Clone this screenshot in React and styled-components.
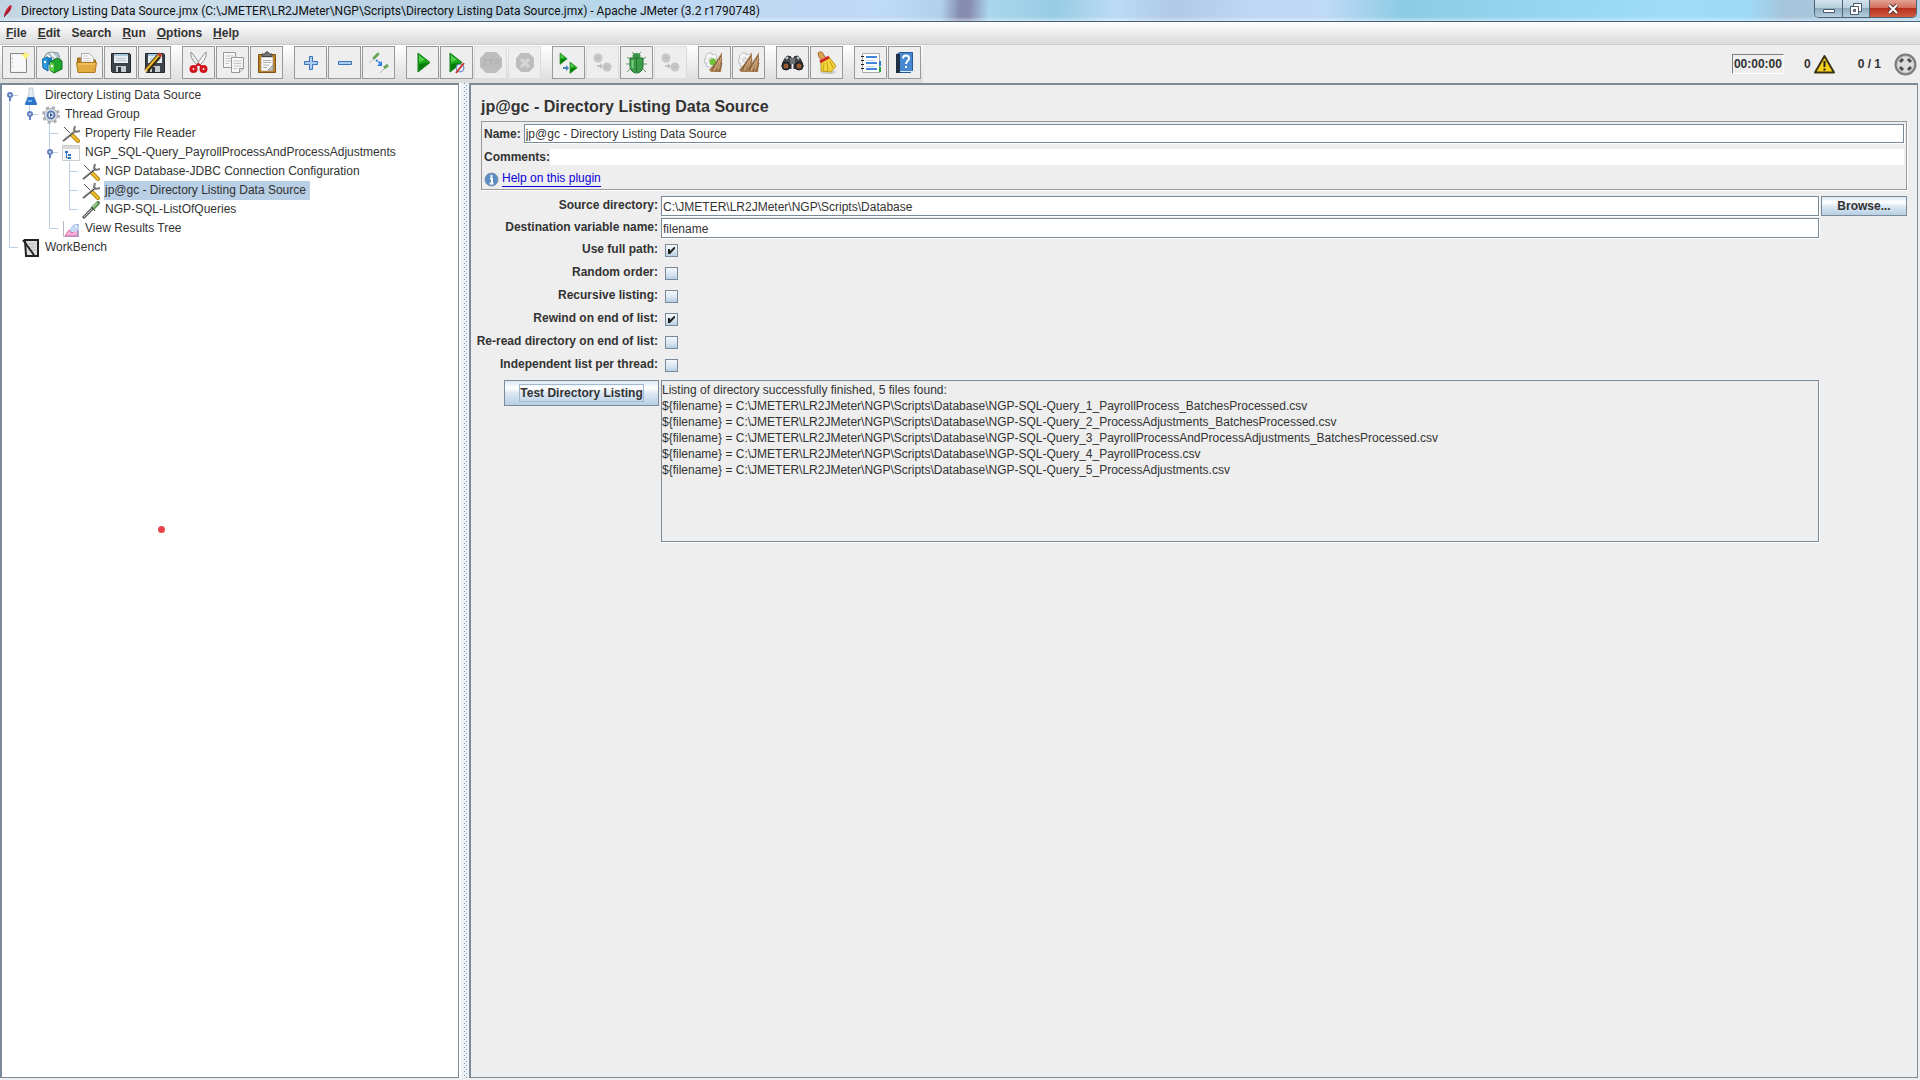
import React, { useState } from 'react'
import styled, { createGlobalStyle, css } from 'styled-components'

const color = {
  text: '#333333',
  panel: '#eeeeee',
  border: '#7a8a99',
  line: '#b8cfe5',
  handle: '#6382bf',
  link: '#0a00d8',
  white: '#ffffff',
}

const GlobalStyle = createGlobalStyle`
  * {
    box-sizing: border-box;
  }
  body {
    margin: 0;
    background: ${color.panel};
    color: ${color.text};
    font-family: "Liberation Sans", Arial, sans-serif;
    font-size: 12px;
  }
  button, input, textarea {
    font: inherit;
    color: inherit;
    margin: 0;
  }
`

const Window = styled.div`
  display: flex;
  flex-direction: column;
  min-height: 100vh;
  position: relative;
`

/* ---------- title bar ---------- */

const TitleBar = styled.header`
  display: flex;
  align-items: flex-start;
  height: 22px;
  padding: 0 3px 0 4px;
  border-bottom: 1px solid #46607a;
  background:
    linear-gradient(180deg, rgba(255, 255, 255, 0.1) 0 80%, rgba(255, 255, 255, 0.5) 100%),
    linear-gradient(94deg, #b9cfe0 0%, #cfe0ec 6%, #bfd6e8 14%, #a9c8dd 25%, #b0d4e8 31%,
      #b8d4f0 35%, #b8d6f5 46%, #a8cbe8 49%, #767fa5 50%, #7d80a6 50.5%, #9fd2ea 51.5%,
      #8cc6e0 55%, #b5d7f4 58%, #a7c4e2 61%, #b6d3f3 65%, #b8d6f5 69%, #7fc6e0 73%,
      #8ad0ee 80%, #95d8f8 87%, #93d5f6 91%, #9dbdd6 93%, #a8cfe6 100%);
`

const Title = styled.h1`
  display: flex;
  align-items: center;
  gap: 5px;
  flex: 1;
  margin: 0;
  height: 21px;
  color: #111111;
  font-family: Roboto, "Noto Sans", sans-serif;
  font-size: 12px;
  font-weight: 400;
  white-space: nowrap;
`

const WindowButtons = styled.div`
  display: flex;
  height: 18px;
  border: 1px solid #4c6478;
  border-top: 0;
  border-radius: 0 0 5px 5px;
  overflow: hidden;
`

const WindowButton = styled.button`
  display: flex;
  align-items: center;
  justify-content: center;
  width: ${(props) => (props.$close ? 47 : 27)}px;
  padding: 0;
  border: 0;
  border-left: ${(props) => (props.$first ? '0' : '1px solid #4c6478')};
  background: ${(props) =>
    props.$close
      ? 'linear-gradient(180deg, #e0a294 0%, #d4705c 45%, #b8301c 50%, #cf5a41 100%)'
      : 'linear-gradient(180deg, #d3e3ee 0%, #b9cfde 45%, #91abbf 50%, #b4cfe0 100%)'};
`

/* ---------- menu and toolbar ---------- */

const MenuBar = styled.nav`
  display: flex;
  align-items: center;
  gap: 11px;
  height: 23px;
  padding: 0 6px;
  border-bottom: 1px solid #cccccc;
  background: linear-gradient(180deg, #ffffff 0%, #dadada 100%);
`

const MenuItem = styled.button`
  padding: 0;
  border: 0;
  background: none;
  font-weight: 700;
  line-height: 16px;
`

const ToolBar = styled.div`
  display: flex;
  justify-content: space-between;
  height: 38px;
`

const Tools = styled.div`
  display: flex;
  gap: 11px;
  padding: 1px 2px 0;
  background: linear-gradient(180deg, #ffffff 0%, #dcdcdc 100%);
`

const ToolGroup = styled.div`
  display: flex;
  gap: 1px;
`

const ToolButton = styled.button`
  display: flex;
  width: 33px;
  height: 33px;
  padding: 3px 0 0 3px;
  border: 1px solid ${(props) => (props.disabled ? '#dcdcdc' : '#999999')};
  background: ${color.panel};

  svg {
    flex-shrink: 0;
  }
`

const Status = styled.div`
  display: flex;
  align-items: center;
  height: 38px;
  padding-right: 3px;
  font-weight: 700;
`

const Timer = styled.span`
  width: 52px;
  margin-right: 20px;
  border: 1px solid ${color.white};
  border-top-color: #808080;
  border-left-color: #808080;
  line-height: 18px;
  text-align: center;
`

const Errors = styled.span`
  display: flex;
  align-items: center;
  gap: 3px;
  margin-right: 23px;
`

const Threads = styled.span`
  margin-right: 13px;
`

/* ---------- split pane ---------- */

const Split = styled.main`
  display: flex;
  flex: 1;
  padding-bottom: 2px;
`

const TreePane = styled.section`
  width: 459px;
  padding-top: 1px;
  border: 1px solid ${color.border};
  border-top-width: 2px;
  border-left-width: 2px;
  background: ${color.white};
`

const Divider = styled.div`
  width: 10px;
  border-left: 2px solid ${color.white};
  background-color: #eef2f7;
  background-image:
    linear-gradient(180deg, #7f90a3 1px, transparent 1px),
    linear-gradient(180deg, #7f90a3 1px, transparent 1px);
  background-position: 3px 0, 5px 2px;
  background-size: 1px 4px;
  background-repeat: repeat-y;
`

const EditorPane = styled.section`
  flex: 1;
  margin-right: 2px;
  padding: 11px 10px 10px;
  border: 1px solid ${color.border};
  border-top-width: 2px;
  border-left-width: 2px;
`

const TreeList = styled.ul`
  margin: 0;
  padding: 0;
  list-style: none;
`

const TreeRow = styled.li`
  display: flex;
  align-items: center;
  height: 19px;
`

const TreeLabel = styled.span`
  margin-left: 4px;
  padding: 0 4px 0 1px;
  line-height: 19px;
  white-space: nowrap;
  background: ${(props) => (props.$selected ? color.line : 'transparent')};
`

/* ---------- editor ---------- */

const Heading = styled.h2`
  margin: 0 0 3px;
  font-size: 16px;
  line-height: 22px;
`

const fieldStyle = css`
  width: 100%;
  border: 1px solid ${color.border};
  border-radius: 0;
  outline: 0;
  box-shadow: 1px 1px 0 ${color.white};
`

const NameBox = styled.div`
  height: 69px;
  padding: 2px;
  border: 1px solid #999999;
  box-shadow: 1px 1px 0 ${color.white};
`

const NameRow = styled.div`
  display: flex;
  align-items: center;
  gap: ${(props) => (props.$tight ? 0 : 3)}px;
  height: ${(props) => (props.$tight ? 16 : 19)}px;
  margin-bottom: 6px;
`

const BoldLabel = styled.label`
  font-weight: 700;
  line-height: 18px;
  white-space: nowrap;
`

const NameInput = styled.input`
  ${fieldStyle}
  height: 19px;
  padding: 0 1px;
  background: ${color.white};
`

const CommentsInput = styled.input`
  width: 100%;
  height: 16px;
  padding: 0 1px;
  border: 0;
  outline: 0;
  background: ${color.white};
`

const HelpRow = styled.div`
  display: flex;
  align-items: center;
  gap: 3px;
`

const HelpLink = styled.a`
  border-bottom: 1px solid ${color.link};
  color: ${color.link};
  line-height: 15px;
  text-decoration: none;
`

const Form = styled.form`
  display: grid;
  grid-template-columns: 178px 1fr 86px;
  column-gap: 2px;
  row-gap: 2px;
  margin-top: 6px;
`

const FormLabel = styled(BoldLabel)`
  justify-self: end;
  padding-right: 1px;
`

const TextField = styled.input`
  ${fieldStyle}
  height: 20px;
  padding: 2px 1px 0;
  background: ${color.white};
`

const CheckCell = styled.div`
  display: flex;
  grid-column: 2 / 4;
  align-items: center;
  height: 21px;
  padding-left: 4px;
`

const CheckBox = styled.input`
  appearance: none;
  display: grid;
  place-items: center;
  width: 13px;
  height: 13px;
  border: 1px solid ${color.border};
  background: linear-gradient(180deg, #f4f8fb 0%, #dde8f3 50%, #b8cfe5 100%);

  &:checked::after {
    content: '';
    width: 7px;
    height: 7px;
    background: #222222;
    clip-path: polygon(0 30%, 28% 30%, 28% 58%, 86% 0, 100% 0, 100% 26%, 30% 100%, 0 100%);
  }
`

const MetalButton = styled.button`
  height: ${(props) => (props.$tall ? 26 : 20)}px;
  padding: 0;
  border: 1px solid ${color.border};
  background: linear-gradient(180deg, #dde8f3 0%, #ffffff 30%, #dde8f3 50%, #b8cfe5 100%);
  font-weight: 700;
  white-space: nowrap;
`

const TestButton = styled(MetalButton)`
  justify-self: end;
  width: 155px;
  margin-top: 2px;
`

const FocusText = styled.span`
  display: inline-block;
  border: 1px solid #a3b8cc;
  line-height: 16px;
`

const Output = styled.textarea`
  ${fieldStyle}
  display: block;
  height: 162px;
  margin-top: 2px;
  padding: 1px 0 0;
  background: ${color.panel};
  line-height: 16px;
  resize: none;
  overflow: hidden;
`

const Pointer = styled.span`
  position: absolute;
  left: 158px;
  top: 526px;
  width: 7px;
  height: 7px;
  border-radius: 50%;
  background: #e8424a;
`

/* ---------- icons ---------- */

const Icon = ({ size = 24, box = 24, children }) => (
  <svg width={size} height={size} viewBox={`0 0 ${box} ${box}`} fill="none" aria-hidden="true">
    {children}
  </svg>
)

const Sheet = ({ x, y, w = 12, h = 15 }) => (
  <g transform={`translate(${x} ${y})`}>
    <path d={`M0 0H${w}V${h - 4}L${w - 4} ${h}H0Z`} fill="#f6f6f6" stroke="#999" />
    <path d={`M${w} ${h - 4}H${w - 4}V${h}`} fill="#ddd" stroke="#999" />
    <path d="M2 3.500h8M2 6h8M2 8.500h8M2 11h4" stroke="#c4c4c4" />
  </g>
)

const Floppy = () => (
  <>
    <path d="M3.500 3.500h18l1 1V22.500H4.500l-1-1Z" fill="#3d444b" stroke="#23282d" />
    <path d="M6 4h14v9H6Z" fill="#e6edf2" />
    <path d="M6 4h14v2H6Z" fill="#a8c8e0" />
    <path d="M8 8.500h10M8 10.500h10" stroke="#bcc6cc" />
    <path d="M8 16h10v6H8Z" fill="#c8ccd0" />
    <path d="M10 17h3v5h-3Z" fill="#30363c" />
  </>
)

const Play = ({ x = 0, y = 0, s = 1 }) => (
  <g transform={`translate(${x} ${y}) scale(${s})`}>
    <path d="M0 0L12 9.500L0 19Z" fill="#1ba81b" stroke="#0d7a12" />
    <path d="M1 11L11 9.500L1 17.500Z" fill="#077a0b" />
    <path d="M1 2L7 7L1 9Z" fill="#54cf4c" />
  </g>
)

const GreyBalls = () => (
  <>
    <circle cx="8" cy="8" r="4.500" fill="#c6c6c6" />
    <circle cx="17" cy="17" r="4.500" fill="#c6c6c6" />
    <path d="M6 8h4M15 17h4" stroke="#b6b6b6" />
    <path d="M7 15h3v-2l3 3-3 3v-2H7Z" fill="#c0c0c0" />
  </>
)

const Gear = () => (
  <>
    <path
      d="M6 3h4v2l3-1 2 2-1 3h2v4h-2v3l-3 1H7l-3-1 1-3H2.500V9H4L3.500 6Z"
      fill="#f8f8f8"
      stroke="#c0c0c0"
    />
    <circle cx="9" cy="10" r="2.500" fill="#e4e4e4" stroke="#cccccc" />
  </>
)

const Bristles = ({ dx = 0 }) => (
  <g transform={`translate(${dx} 0)`}>
    <path d="M20 2L13 13L7 20L9 22H19L20 14Z" fill="#b08458" />
    <path d="M19 6L10 21M20 9L14 22M20 13L17 22M16 10L9 20" stroke="#80603c" />
    <path d="M17 10L12 20M19 8L16 19" stroke="#d6b488" />
  </g>
)

const icons = {
  New: (
    <>
      <path d="M4.500 3.500h16v19h-16Z" fill="#f1f1f1" stroke="#888" />
      <path d="M6 5h13v16H6Z" fill="#f8f8f8" />
      <path d="M6.500 8v1M6.500 12v1M6.500 16v1" stroke="#aaa" />
      <path d="M20 1l1 3 3 1-3 2-1 3-2-3-3-2 3-1Z" fill="#fbf27a" />
    </>
  ),
  Templates: (
    <>
      <path d="M4 7l3-4 4-1 7 1 2 5v4H5Z" fill="#b5c3cb" stroke="#8797a1" />
      <path d="M7 5l6 5M11 3l6 6" stroke="#f2f5f7" strokeWidth="2" />
      <path d="M2.500 9L8 7v14l-5-3Z" fill="#2f9ae0" stroke="#1369a8" />
      <path d="M8 8l4-1v7l-4 1Z" fill="#1b79be" />
      <path d="M10 12l7-4 5 3v8l-8 4-4-3Z" fill="#20a52c" stroke="#0d7219" />
      <path d="M10 12l4 2v8l-4-2Z" fill="#65d24b" />
      <path d="M4 12h2M11 16h2" stroke="#fff" strokeWidth="2" />
    </>
  ),
  Open: (
    <>
      <path d="M3.500 12V8h4l2 2h12v3Z" fill="#b78524" stroke="#986b16" />
      <path d="M7.500 3.500h8l4 4V14h-12Z" fill="#fafafa" stroke="#aaa" />
      <path d="M9 6h5M9 8.500h8M9 11h8" stroke="#ccc" />
      <path d="M2.500 12.500h20L21 22.500H4Z" fill="#e3ac42" stroke="#b07b1d" />
      <path d="M4 14h17" stroke="#f6cf7c" />
    </>
  ),
  Save: <Floppy />,
  'Save as': (
    <>
      <Floppy />
      <path d="M4 21L17 6" stroke="#3a2d10" strokeWidth="5" />
      <path d="M4 20L17 5" stroke="#e8b92c" strokeWidth="2" />
      <path d="M17 6L19 4" stroke="#cf3a2b" strokeWidth="4" />
      <path d="M2 23l1-4 3 2Z" fill="#f1d7a0" />
    </>
  ),
  Cut: (
    <>
      <path d="M5 2c-1 5 2 9 7 14l2-2C11 10 8 5 5 2Z" fill="#ececec" stroke="#8c8c8c" />
      <path d="M20 2c1 5-2 9-7 14l-2-2C14 10 17 5 20 2Z" fill="#f6f6f6" stroke="#8c8c8c" />
      <ellipse cx="7.500" cy="19" rx="2.500" ry="2.500" stroke="#d4141d" strokeWidth="3" />
      <ellipse cx="17.500" cy="19" rx="2.500" ry="2.500" stroke="#d4141d" strokeWidth="3" />
      <path d="M9 17l3.500-3 3.500 3" stroke="#d4141d" strokeWidth="2" />
    </>
  ),
  Copy: (
    <>
      <Sheet x={3.5} y={2.5} />
      <Sheet x={11.5} y={7.5} />
    </>
  ),
  Paste: (
    <>
      <path d="M4.500 4.500h17v18h-17Z" fill="#b9812e" stroke="#805313" />
      <path d="M7.500 7.500h11v13h-11Z" fill="#fafafa" stroke="#d5d5d5" />
      <path d="M9 10.500h8M9 12.500h8M9 15h6M9 17.500h4" stroke="#b0b0b0" />
      <path d="M19 15v5h-5Z" fill="#ccc" stroke="#999" />
      <path d="M8 6.500V4h3l1-2h2l1 2h3v2.500Z" fill="#777" stroke="#444" />
    </>
  ),
  'Expand all': (
    <path d="M11.500 6.500h3v5h5v3h-5v5h-3v-5h-5v-3h5Z" fill="#a9cdf0" stroke="#3c72b8" />
  ),
  'Collapse all': <path d="M6.500 11.500h13v3h-13Z" fill="#a9cdf0" stroke="#3c72b8" />,
  Toggle: (
    <>
      <path d="M3 13l6-5" stroke="#c4c4c4" />
      <path d="M8 8l4-4" stroke="#6ba65d" strokeWidth="3" strokeLinecap="round" />
      <path d="M14 23l5-5" stroke="#b0b0b0" />
      <path d="M18 18l4-3" stroke="#6ba65d" strokeWidth="3" />
      <path d="M10 10l4 3" stroke="#2d7fe0" strokeWidth="2" strokeDasharray="2 1" />
      <path d="M16 11v5h-5Z" fill="#2d7fe0" />
    </>
  ),
  Start: <Play x={8} y={3} />,
  'Start no pauses': (
    <>
      <Play x={6} y={3} />
      <circle cx="16" cy="18" r="4" fill="#e4eef8" stroke="#5d87bd" />
      <path d="M12 23L20 13" stroke="#d2352e" strokeWidth="2" />
    </>
  ),
  Stop: (
    <>
      <path d="M8 2h10l6 6v9l-6 6H8l-6-6V8Z" fill="#bdbdbd" />
      <path d="M5 10h4l-4 5h4M11 10h4M13 10v5M17 10h4v3h-4v2" stroke="#adadad" />
    </>
  ),
  Shutdown: (
    <>
      <path d="M9 3h8l5 5v9l-5 5H9l-5-5V8Z" fill="#bdbdbd" />
      <path d="M9 9l8 8M17 9l-8 8" stroke="#d8d8d8" strokeWidth="3" />
    </>
  ),
  'Remote start all': (
    <>
      <Play x={4} y={3} s={0.6} />
      <Play x={14} y={12} s={0.6} />
      <path d="M7 17h3v-2l3 3-3 3v-2H7Z" fill="#4a80b8" />
    </>
  ),
  'Remote stop all': <GreyBalls />,
  'Remote shutdown': (
    <>
      <path
        d="M8 2l3 3M17 2l-3 3M3 7l4 3M22 7l-4 3M2 14h5M18 14h5M3 22l4-4M22 22l-4-4"
        stroke="#5d9c62"
      />
      <ellipse cx="12.500" cy="6" rx="4" ry="3" fill="#3d9347" />
      <path d="M6 8h13v8c0 4-3 7-6.500 7S6 20 6 16Z" fill="#3c9c48" stroke="#26702f" />
      <path d="M12.500 8v14" stroke="#26702f" />
      <path d="M8.500 10v8" stroke="#7ccf80" strokeWidth="2" />
    </>
  ),
  'Remote exit': <GreyBalls />,
  Clear: (
    <>
      <Gear />
      <circle cx="11" cy="12" r="3.500" fill="#6cc23a" />
      <Bristles />
    </>
  ),
  'Clear all': (
    <>
      <Gear />
      <Bristles dx={-4} />
      <Bristles dx={3} />
    </>
  ),
  Search: (
    <>
      <path d="M2 17c0-4 3-10 6-11l3 1v12M23 17c0-4-3-10-6-11l-3 1v12" fill="#44484c" stroke="#202326" />
      <path d="M10 8h5v6h-5Z" fill="#6d7276" />
      <circle cx="6" cy="16" r="4" fill="#2a2c2e" stroke="#1b1c1d" />
      <circle cx="19" cy="16" r="4" fill="#2a2c2e" stroke="#1b1c1d" />
      <circle cx="6" cy="16" r="2.500" fill="#9c5a32" />
      <circle cx="19" cy="16" r="2.500" fill="#9c5a32" />
      <path d="M6 9l2-2M17 7l2 2" stroke="#c4c8cc" strokeWidth="2" />
    </>
  ),
  'Reset search': (
    <>
      <ellipse cx="14" cy="22" rx="8" ry="2" fill="#cccccc" />
      <path d="M4 3c2-2 5-1 5 1l3 4-4 3-3-4Z" fill="#dca255" stroke="#a06a24" />
      <path d="M7 11l8-4 7 9-5 6-10-1Z" fill="#f2d43c" stroke="#c09a17" />
      <path d="M10 13l-1 8M13 12l1 9M16 11l3 7" stroke="#c9a31c" />
      <path d="M6 12l9-5" stroke="#cf2a25" strokeWidth="3" />
    </>
  ),
  'Function helper': (
    <>
      <path d="M4.500 3.500h17v19h-17Z" fill="#fff" stroke="#aaa" />
      <path d="M8 7h11M8 13h11M8 19h11" stroke="#3f86d8" strokeWidth="2" />
      <path d="M8 10.500h9M8 16.500h9" stroke="#c4d8ee" />
      <path d="M3 6.500h3M3 10.500h3M3 14.500h3M3 18.500h3" stroke="#222" />
      <path d="M21 11h2v5h-2Z" fill="#2f7fd0" />
      <path d="M21 17h2v5h-2Z" fill="#29a23a" />
    </>
  ),
  Help: (
    <>
      <path d="M4.500 4.500l3-2h13v18l-2 2h-14Z" fill="#4688d2" stroke="#28579a" />
      <path d="M4 4h4v19H4Z" fill="#1f2f45" />
      <path d="M8 21.500h12" stroke="#dfe8f2" />
      <path d="M11 8.500c0-4 6-4 6 0c0 2-3 3-3 5.500M14 16v2" stroke="#fff" strokeWidth="2" />
    </>
  ),
}

const treeIcons = {
  plan: (
    <>
      <path d="M7 1h4v6l4 10q0 1-1 1H4q-1 0-1-1L7 7Z" fill="#e6edf5" stroke="#c2cbd6" />
      <path d="M6 10h6l3 7q0 1-1 1H4q-1 0-1-1Z" fill="#2a72ca" />
      <path d="M6 14h4" stroke="#77b1ec" strokeWidth="2" />
    </>
  ),
  threads: (
    <>
      <circle cx="9" cy="9" r="7.500" stroke="#a9afb6" strokeWidth="3" strokeDasharray="3 3" />
      <circle cx="9" cy="9" r="6.500" fill="#dfe2e6" stroke="#a4a9af" />
      <circle cx="9" cy="9" r="3.500" fill="#f3f6fb" stroke="#5f7db0" strokeWidth="2" />
      <path d="M8 7l3 2-3 2Z" fill="#2d4f96" />
    </>
  ),
  config: (
    <>
      <path d="M2 2l8 8" stroke="#555" />
      <path d="M10 10l6 6" stroke="#b8860f" strokeWidth="4" strokeLinecap="round" />
      <path d="M10 10l6 6" stroke="#f3c22e" strokeWidth="2" strokeLinecap="round" />
      <path d="M1 16L13 6" stroke="#555" strokeWidth="2" />
      <path d="M1 15L13 5" stroke="#ccc" />
      <path d="M13 1l-1 4 2 2 4-1" stroke="#777" strokeWidth="2" />
    </>
  ),
  controller: (
    <>
      <path d="M.5 1.500h17v15H.5Z" fill="#fafafa" stroke="#ccc" />
      <path d="M1 2h16v3H1Z" fill="#dadada" />
      <path d="M3 7h3v2H3ZM6 10h3v2H6ZM6 13h3v2H6Z" fill="#2f76c8" />
      <path d="M4.500 9v5H6" stroke="#2f76c8" />
    </>
  ),
  sampler: (
    <>
      <path d="M1 17L11 7" stroke="#555" strokeWidth="3" />
      <path d="M2 16L11 7" stroke="#d5d5d5" />
      <path d="M11 7L16 2" stroke="#5c9152" strokeWidth="4" strokeLinecap="round" />
      <path d="M11 6L15 2" stroke="#9ccb8d" strokeWidth="2" />
      <path d="M9 6l4 4" stroke="#333" />
    </>
  ),
  results: (
    <>
      <path d="M1.500 1v15.500H17" stroke="#b5b5c6" />
      <path d="M3 16l4-6 3 3 4-4 2 2v5Z" fill="#f5b0d8" stroke="#d565a4" />
      <path d="M9 12c-1-6 4-8 7-7M16 4v12" stroke="#7d9edb" />
      <circle cx="12" cy="9" r="3" fill="#c6d9f4" />
    </>
  ),
  workbench: (
    <>
      <path d="M3 1h13v16H4Z" fill="#dddddd" stroke="#222" strokeWidth="2" />
      <path d="M6 5h8M6 8h8M6 11h8" stroke="#bbb" />
      <path d="M1 1l11 15" stroke="#222" strokeWidth="2" />
    </>
  ),
}

const guidePaths = {
  blank: '',
  pass: 'M7.500 0V19',
  start: 'M7.500 9V19M8 9.500H16',
  mid: 'M7.500 0V19M8 9.500H16',
  end: 'M7.500 0V9.500H16',
}

const Guide = ({ kind, handle }) => (
  <svg width="20" height="19" viewBox="0 0 20 19" fill="none" aria-hidden="true">
    <path d={guidePaths[kind]} stroke={color.line} />
    {handle && (
      <>
        <path d="M8 11V15" stroke={color.handle} strokeWidth="2" />
        <circle cx="8" cy="9" r="2" fill="#e6edf8" stroke={color.handle} strokeWidth="2" />
      </>
    )}
  </svg>
)

/* ---------- data ---------- */

const menu = [
  ['F', 'ile'],
  ['E', 'dit'],
  ['', 'Search'],
  ['R', 'un'],
  ['O', 'ptions'],
  ['H', 'elp'],
]

const toolGroups = [
  ['New', 'Templates', 'Open', 'Save', 'Save as'],
  ['Cut', 'Copy', 'Paste'],
  ['Expand all', 'Collapse all', 'Toggle'],
  ['Start', 'Start no pauses', 'Stop', 'Shutdown'],
  ['Remote start all', 'Remote stop all', 'Remote shutdown', 'Remote exit'],
  ['Clear', 'Clear all'],
  ['Search', 'Reset search'],
  ['Function helper', 'Help'],
]

const disabledTools = ['Stop', 'Shutdown', 'Remote stop all', 'Remote exit']

const nodes = [
  { name: 'Directory Listing Data Source', icon: 'plan', guides: ['start'], open: true },
  { name: 'Thread Group', icon: 'threads', guides: ['pass', 'end'], open: true },
  { name: 'Property File Reader', icon: 'config', guides: ['pass', 'blank', 'mid'] },
  {
    name: 'NGP_SQL-Query_PayrollProcessAndProcessAdjustments',
    icon: 'controller',
    guides: ['pass', 'blank', 'mid'],
    open: true,
  },
  {
    name: 'NGP Database-JDBC Connection Configuration',
    icon: 'config',
    guides: ['pass', 'blank', 'pass', 'mid'],
  },
  {
    name: 'jp@gc - Directory Listing Data Source',
    icon: 'config',
    guides: ['pass', 'blank', 'pass', 'mid'],
    selected: true,
  },
  { name: 'NGP-SQL-ListOfQueries', icon: 'sampler', guides: ['pass', 'blank', 'pass', 'end'] },
  { name: 'View Results Tree', icon: 'results', guides: ['pass', 'blank', 'end'] },
  { name: 'WorkBench', icon: 'workbench', guides: ['end'] },
]

const options = [
  { id: 'fullPath', label: 'Use full path:', checked: true },
  { id: 'random', label: 'Random order:', checked: false },
  { id: 'recursive', label: 'Recursive listing:', checked: false },
  { id: 'rewind', label: 'Rewind on end of list:', checked: true },
  { id: 'reread', label: 'Re-read directory on end of list:', checked: false },
  { id: 'independent', label: 'Independent list per thread:', checked: false },
]

const directory = 'C:\\JMETER\\LR2JMeter\\NGP\\Scripts\\Database'

const files = [
  'NGP-SQL-Query_1_PayrollProcess_BatchesProcessed.csv',
  'NGP-SQL-Query_2_ProcessAdjustments_BatchesProcessed.csv',
  'NGP-SQL-Query_3_PayrollProcessAndProcessAdjustments_BatchesProcessed.csv',
  'NGP-SQL-Query_4_PayrollProcess.csv',
  'NGP-SQL-Query_5_ProcessAdjustments.csv',
]

const listing = [
  `Listing of directory successfully finished, ${files.length} files found:`,
  ...files.map((file) => '${filename} = ' + directory + '\\' + file),
].join('\n')

/* ---------- components ---------- */

function WindowTitle() {
  return (
    <TitleBar>
      <Title>
        <Icon size={12} box={12}>
          <path d="M0 12C0 7 4 1 7 0c2 1-1 8-5 10Z" fill="#cf2438" />
          <path d="M0 12L6 3" stroke="#6d1530" />
        </Icon>
        Directory Listing Data Source.jmx (C:\JMETER\LR2JMeter\NGP\Scripts\Directory Listing Data
        Source.jmx) - Apache JMeter (3.2 r1790748)
      </Title>
      <WindowButtons>
        <WindowButton $first aria-label="Minimize">
          <Icon size={14} box={14}>
            <path d="M1.500 7.500h11v3h-11Z" fill="#fff" stroke="#4b5a68" />
          </Icon>
        </WindowButton>
        <WindowButton aria-label="Restore">
          <Icon size={14} box={14}>
            <path d="M4.500 1.500h8v8h-8Z" fill="#fff" stroke="#4b5a68" />
            <path d="M1.500 4.500h8v8h-8Z" fill="#fff" stroke="#4b5a68" />
            <path d="M4.500 7.500h2v2h-2Z" fill="#8ba4b8" stroke="#4b5a68" />
          </Icon>
        </WindowButton>
        <WindowButton $close aria-label="Close">
          <Icon size={14} box={14}>
            <path d="M3 3l8 8M11 3l-8 8" stroke="#5b3535" strokeWidth="4" />
            <path d="M3 3l8 8M11 3l-8 8" stroke="#fff" strokeWidth="2" />
          </Icon>
        </WindowButton>
      </WindowButtons>
    </TitleBar>
  )
}

function MainToolBar() {
  return (
    <ToolBar>
      <Tools>
        {toolGroups.map((group) => (
          <ToolGroup key={group[0]}>
            {group.map((name) => (
              <ToolButton key={name} aria-label={name} disabled={disabledTools.includes(name)}>
                <Icon>{icons[name]}</Icon>
              </ToolButton>
            ))}
          </ToolGroup>
        ))}
      </Tools>
      <Status>
        <Timer>00:00:00</Timer>
        <Errors>
          0
          <Icon size={21} box={21}>
            <path
              d="M10.500 2L20 18.500H1Z"
              fill="#f7d117"
              stroke="#3b3413"
              strokeWidth="2"
              strokeLinejoin="round"
            />
            <path d="M10.500 7v6M10.500 14.500v2" stroke="#222" strokeWidth="2" />
          </Icon>
        </Errors>
        <Threads>0 / 1</Threads>
        <Icon size={23} box={23}>
          <circle cx="11.500" cy="11.500" r="10" fill="#b9b9b9" stroke="#7c7c7c" strokeWidth="2" />
          <circle cx="11.500" cy="11.500" r="8" fill="#dcdcdc" />
          <path d="M6 9L9 6M14 6l3 3M17 14l-3 3M9 17l-3-3" stroke="#4d4d4d" strokeWidth="3" />
        </Icon>
      </Status>
    </ToolBar>
  )
}

function TestTree() {
  return (
    <TreePane>
      <TreeList>
        {nodes.map((node) => (
          <TreeRow key={node.name}>
            {node.guides.map((kind, i) => (
              <Guide key={i} kind={kind} handle={node.open && i === node.guides.length - 1} />
            ))}
            <Icon size={18} box={18}>
              {treeIcons[node.icon]}
            </Icon>
            <TreeLabel $selected={node.selected}>{node.name}</TreeLabel>
          </TreeRow>
        ))}
      </TreeList>
    </TreePane>
  )
}

function Option({ id, label, checked }) {
  const [on, setOn] = useState(checked)
  return (
    <React.Fragment>
      <FormLabel htmlFor={id}>{label}</FormLabel>
      <CheckCell>
        <CheckBox id={id} type="checkbox" checked={on} onChange={() => setOn(!on)} />
      </CheckCell>
    </React.Fragment>
  )
}

function Editor() {
  return (
    <EditorPane>
      <Heading>jp@gc - Directory Listing Data Source</Heading>
      <NameBox>
        <NameRow>
          <BoldLabel htmlFor="name">Name:</BoldLabel>
          <NameInput id="name" defaultValue="jp@gc - Directory Listing Data Source" />
        </NameRow>
        <NameRow $tight>
          <BoldLabel htmlFor="comments">Comments:</BoldLabel>
          <CommentsInput id="comments" />
        </NameRow>
        <HelpRow>
          <Icon size={15} box={15}>
            <circle cx="7.500" cy="7.500" r="6.500" fill="#5b8cc4" stroke="#7d93ad" />
            <path d="M7.500 3v2M6 6.500h2v5M5.500 11.500h4" stroke="#fff" strokeWidth="2" />
          </Icon>
          <HelpLink href="#help">Help on this plugin</HelpLink>
        </HelpRow>
      </NameBox>
      <Form onSubmit={(e) => e.preventDefault()}>
        <FormLabel htmlFor="source">Source directory:</FormLabel>
        <TextField id="source" defaultValue={directory} />
        <MetalButton type="button">Browse...</MetalButton>
        <FormLabel htmlFor="variable">Destination variable name:</FormLabel>
        <TextField id="variable" defaultValue="filename" />
        <span />
        {options.map((option) => (
          <Option key={option.id} {...option} />
        ))}
        <TestButton type="button" $tall>
          <FocusText>Test Directory Listing</FocusText>
        </TestButton>
        <Output readOnly aria-label="Listing" value={listing} />
      </Form>
    </EditorPane>
  )
}

function App() {
  return (
    <Window>
      <GlobalStyle />
      <WindowTitle />
      <MenuBar>
        {menu.map(([key, rest]) => (
          <MenuItem key={rest}>
            {key && <u>{key}</u>}
            {rest}
          </MenuItem>
        ))}
      </MenuBar>
      <MainToolBar />
      <Split>
        <TestTree />
        <Divider />
        <Editor />
      </Split>
      <Pointer />
    </Window>
  )
}

export default App
